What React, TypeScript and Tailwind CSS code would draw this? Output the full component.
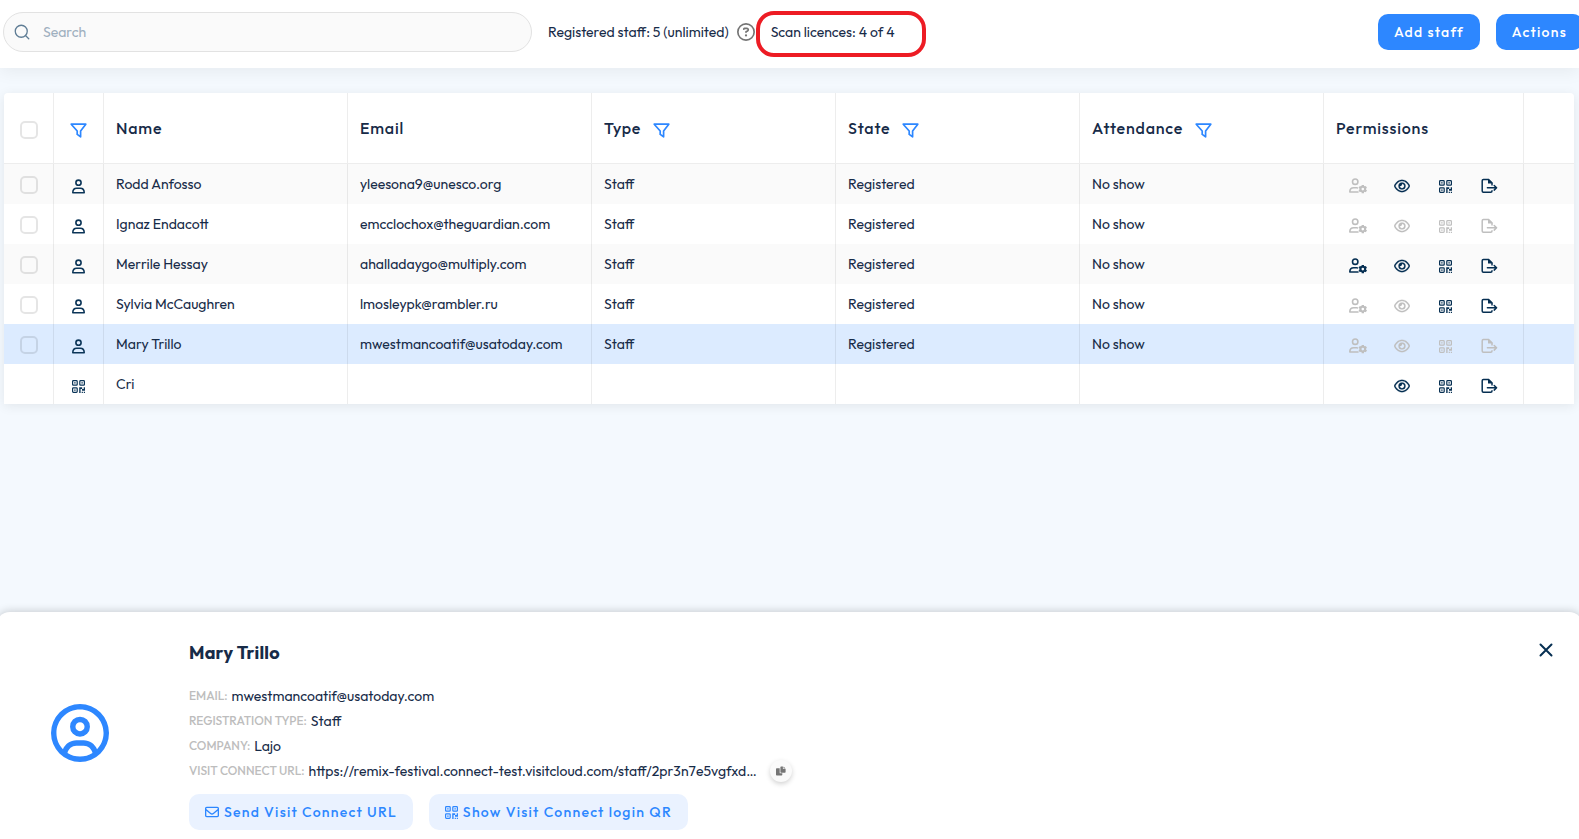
import type { ReactNode } from "react";
import { Search } from "lucide-react";
import { FaRegCircleQuestion, FaRegCircleUser, FaRegEnvelope, FaRegEye } from "react-icons/fa6";

type Permission = "manage" | "view" | "scan" | "export";

interface Person {
  name: string;
  email: string;
  device?: boolean;
  selected?: boolean;
  granted: Permission[];
}

const people: Person[] = [
  { name: "Rodd Anfosso", email: "yleesona9@unesco.org", granted: ["view", "scan", "export"] },
  { name: "Ignaz Endacott", email: "emcclochox@theguardian.com", granted: [] },
  { name: "Merrile Hessay", email: "ahalladaygo@multiply.com", granted: ["manage", "view", "scan", "export"] },
  { name: "Sylvia McCaughren", email: "lmosleypk@rambler.ru", granted: ["scan", "export"] },
  { name: "Mary Trillo", email: "mwestmancoatif@usatoday.com", selected: true, granted: [] },
  { name: "Cri", email: "", device: true, granted: ["view", "scan", "export"] },
];

function FilterIcon() {
  return (
    <svg viewBox="0 0 17 15" className="h-[15px] w-[17px]" fill="none" stroke="currentColor" strokeWidth="1.7" strokeLinejoin="round" aria-hidden="true">
      <path d="M1.2 1.2h14.600L10.600 8v5.800L7.200 11.400V8z" />
    </svg>
  );
}

function UserIcon() {
  return (
    <svg viewBox="0 0 13 15" className="h-[15px] w-[13px]" fill="none" stroke="currentColor" strokeWidth="1.6" aria-hidden="true">
      <circle cx="6.5" cy="3.7" r="2.6" />
      <path d="M.8 13.700c0-2.600 1.600-4.400 3.900-4.400h3.600c2.300 0 3.900 1.800 3.900 4.400z" strokeLinejoin="round" />
    </svg>
  );
}

function QrIcon() {
  return (
    <svg viewBox="0.5 0.5 13 13" className="size-[13px]" fill="currentColor" aria-hidden="true">
      <g fill="none" stroke="currentColor" strokeWidth="1.2">
        <rect x="1.1" y="1.1" width="4.6" height="4.6" rx="0.8" />
        <rect x="8.3" y="1.1" width="4.6" height="4.6" rx="0.8" />
        <rect x="1.1" y="8.3" width="4.6" height="4.6" rx="0.8" />
      </g>
      <path d="M2.7 2.7h1.4v1.4H2.7zM9.9 2.7h1.4v1.4H9.9zM2.7 9.9h1.4v1.4H2.7z" />
      <path d="M7.7 7.7h3v1.7h1.5V7.7h1.3v3.6h-3V9.6H9.1v3.9H7.7zM10.2 12.2h1.2v1.3h-1.2zM12.3 12.2h1.2v1.3h-1.2z" />
    </svg>
  );
}

function UserGearIcon() {
  return (
    <svg viewBox="0 0 18 16" className="h-4 w-[18px]" fill="none" stroke="currentColor" strokeWidth="1.6" aria-hidden="true">
      <circle cx="6.2" cy="3.7" r="2.7" />
      <path d="M9.6 14H.8c0-2.6 1.7-4.2 4-4.2h2.8c.6 0 1.1.1 1.5.3" strokeLinejoin="round" />
      <circle cx="13.8" cy="11.1" r="2.3" strokeWidth="2" />
      <path
        d="M13.8 6.9v1.6M13.8 13.7v1.6M10.16 9l1.4.8M16.04 12.4l1.4.8M10.16 13.2l1.4-.8M16.04 9.8l1.4-.8"
        strokeWidth="2.4"
      />
    </svg>
  );
}

function FileExportIcon() {
  return (
    <svg viewBox="0 0 17 16" className="h-4 w-[17px]" fill="none" stroke="currentColor" strokeWidth="1.5" aria-hidden="true">
      <path d="M11 7.4V4.8L7.6 1.6H2.4c-.8 0-1.2.5-1.2 1.2v10.2c0 .8.4 1.2 1.2 1.2h7.4c.8 0 1.2-.4 1.2-1.2v-.8" />
      <path d="M7 1v4.6h4.8z" fill="currentColor" stroke="none" />
      <path d="M6.4 9.8h9M13.2 7.5l2.4 2.3-2.4 2.3" strokeLinejoin="round" strokeLinecap="round" />
    </svg>
  );
}

function CopyIcon() {
  return (
    <svg viewBox="0 0 10 10" className="size-2.5" fill="currentColor" aria-hidden="true">
      <path d="M.7 2.3h3v5h2.6v1.4c0 .4-.3.7-.7.7H.7C.3 9.4 0 9.1 0 8.7V3c0-.4.3-.7.7-.7z" />
      <path d="M5.1.4h1.8v2.5h2.7V6c0 .4-.3.7-.7.7H5.1c-.4 0-.7-.3-.7-.7V1.1c0-.4.3-.7.7-.7z" />
      <path d="M7.5.4l2.1 2H7.5z" />
    </svg>
  );
}

const permissionIcons: { key: Permission; label: string; icon: ReactNode }[] = [
  { key: "manage", label: "Manage staff", icon: <UserGearIcon /> },
  { key: "view", label: "View visitors", icon: <FaRegEye className="size-4" stroke="currentColor" strokeWidth={8} /> },
  { key: "scan", label: "Scan", icon: <QrIcon /> },
  { key: "export", label: "Export", icon: <FileExportIcon /> },
];

function Checkbox({ label }: { label: string }) {
  return (
    <input
      type="checkbox"
      aria-label={label}
      className="mt-0.5 block size-[18px] appearance-none rounded-[5px] border-2 border-black/10 checked:bg-[#2d87ff]"
    />
  );
}

function HeaderCell({ title, filter }: { title: string; filter?: boolean }) {
  return (
    <th scope="col" className="border-r border-b border-black/[0.07] px-3 text-left font-medium">
      <div className="flex items-center gap-3 text-base tracking-wider">
        <span>{title}</span>
        {filter && (
          <button type="button" aria-label={`Filter by ${title}`} className="mt-1 text-[#2d87ff]">
            <FilterIcon />
          </button>
        )}
      </div>
    </th>
  );
}

function PersonRow({ person }: { person: Person }) {
  const cell = "border-r border-black/[0.07] px-3";
  const state = person.device ? ["", "", ""] : ["Staff", "Registered", "No show"];
  return (
    <tr className={person.selected ? "h-10 bg-[#dcebff]" : "h-10 odd:bg-[#fafafa]"}>
      <td className="border-r border-black/[0.07] px-4">
        {!person.device && <Checkbox label={`Select ${person.name}`} />}
      </td>
      <td className="border-r border-black/[0.07] text-[#0b3558]">
        <div className="mt-1 flex justify-center">{person.device ? <QrIcon /> : <UserIcon />}</div>
      </td>
      <td className={cell}>{person.name}</td>
      <td className={cell}>{person.email}</td>
      {state.map((value, i) => (
        <td key={i} className={cell}>
          {value}
        </td>
      ))}
      <td className="border-r border-black/[0.07] px-3">
        <div className="mt-1 grid grid-cols-4">
          {permissionIcons.map(({ key, label, icon }) => {
            const on = person.granted.includes(key);
            if (person.device && !on) return <span key={key} />;
            return (
              <button
                key={key}
                type="button"
                aria-label={label}
                aria-pressed={on}
                className={on ? "flex h-5 items-center justify-center text-[#062f52]" : "flex h-5 items-center justify-center text-[#bfbfbf]"}
              >
                {icon}
              </button>
            );
          })}
        </div>
      </td>
      <td />
    </tr>
  );
}

function Detail({ label, children }: { label: string; children: ReactNode }) {
  return (
    <div className="flex h-[25px] items-center gap-1">
      <dt className="text-xs font-medium text-[#bdbdbd]">{label}</dt>
      <dd className="flex items-center gap-3">{children}</dd>
    </div>
  );
}

export default function App() {
  return (
    <div className="flex min-h-screen flex-col overflow-hidden bg-[#f4f9fe] font-['Outfit','Lato',sans-serif] text-sm leading-5 text-[#172b48]">
      <header className="flex h-17 items-center bg-white pb-1 pl-[3px] shadow-[0_4px_16px_rgba(0,0,0,0.06)]">
        <label className="flex h-10 w-[529px] items-center gap-3 rounded-full border border-[#e2e2e2] bg-[#fafafa] px-[9px]">
          <Search className="size-[18px] text-[#5f7d95]" strokeWidth={1.75} aria-hidden="true" />
          <input
            type="search"
            aria-label="Search"
            placeholder="Search"
            className="min-w-0 flex-1 bg-transparent outline-none placeholder:text-[#9fb0bf]"
          />
        </label>
        <p className="ml-4 whitespace-nowrap">Registered staff: 5 (unlimited)</p>
        <button type="button" aria-label="About registered staff" className="ml-2 text-[#757575]">
          <FaRegCircleQuestion className="size-[18px]" />
        </button>
        <p className="mt-1 ml-px flex h-[46px] w-[170px] items-center whitespace-nowrap rounded-[18px] border-4 border-[#ed1c24] pb-1 pl-[11px]">
          Scan licences: 4 of 4
        </p>
        <div className="-mr-1 ml-auto flex gap-4 font-medium tracking-[0.09em] text-white">
          <button type="button" className="h-9 rounded-[10px] bg-[#2d87ff] px-4">
            Add staff
          </button>
          <button type="button" className="h-9 rounded-[10px] bg-[#2d87ff] px-4">
            Actions
          </button>
        </div>
      </header>

      <main className="flex-1 pt-[25px] pr-[5px] pl-1">
        <div className="overflow-hidden rounded-t-[4px] bg-white shadow-[0_2px_12px_rgba(0,0,0,0.08)]">
          <table className="w-full table-fixed border-separate border-spacing-0">
            <colgroup>
              <col className="w-[50px]" />
              <col className="w-[50px]" />
              <col />
              <col />
              <col />
              <col />
              <col />
              <col className="w-[200px]" />
              <col className="w-[50px]" />
            </colgroup>
            <thead>
              <tr className="h-[71px]">
                <th className="border-r border-b border-black/[0.07] px-4 pt-0.5">
                  <Checkbox label="Select all" />
                </th>
                <th className="border-r border-b border-black/[0.07]">
                  <button type="button" aria-label="Filter by kind" className="mt-1 flex w-full justify-center text-[#2d87ff]">
                    <FilterIcon />
                  </button>
                </th>
                <HeaderCell title="Name" />
                <HeaderCell title="Email" />
                <HeaderCell title="Type" filter />
                <HeaderCell title="State" filter />
                <HeaderCell title="Attendance" filter />
                <HeaderCell title="Permissions" />
                <td className="border-b border-black/[0.07]" />
              </tr>
            </thead>
            <tbody>
              {people.map((person) => (
                <PersonRow key={person.name} person={person} />
              ))}
            </tbody>
          </table>
        </div>
      </main>

      <section aria-label="Mary Trillo" className="-mx-1 flex rounded-t-[14px] bg-white px-1 pb-[9px] shadow-[0_-1px_8px_rgba(0,0,0,0.18)]">
        <div className="flex w-[189px] items-center pt-6 pl-[51px] text-[#2d87ff]">
          <FaRegCircleUser className="size-[58px]" />
        </div>
        <div className="flex-1 pt-[29px]">
          <h2 className="mb-[18px] text-lg leading-6 font-bold tracking-[0.0125em]">Mary Trillo</h2>
          <dl className="mb-[11px]">
            <Detail label="EMAIL:">mwestmancoatif@usatoday.com</Detail>
            <Detail label="REGISTRATION TYPE:">Staff</Detail>
            <Detail label="COMPANY:">Lajo</Detail>
            <Detail label="VISIT CONNECT URL:">
              <span>https://remix-festival.connect-test.visitcloud.com/staff/2pr3n7e5vgfxd…</span>
              <button
                type="button"
                aria-label="Copy URL"
                className="ml-px flex size-[22px] items-center justify-center rounded-full bg-[#fafafa] text-[#757575] shadow-[0_2px_5px_rgba(0,0,0,0.18)]"
              >
                <CopyIcon />
              </button>
            </Detail>
          </dl>
          <div className="flex gap-4 font-medium tracking-[0.09em] text-[#2d87ff]">
            <button type="button" className="flex h-9 items-center gap-[5px] rounded-[10px] bg-[#eaf2ff] px-4">
              <FaRegEnvelope className="size-[14px]" />
              Send Visit Connect URL
            </button>
            <button type="button" className="flex h-9 items-center gap-[5px] rounded-[10px] bg-[#eaf2ff] px-4">
              <QrIcon />
              Show Visit Connect login QR
            </button>
          </div>
        </div>
        <button type="button" aria-label="Close" className="mt-[30px] mr-[25px] size-4 self-start text-[#062f52]">
          <svg viewBox="0 0 16 16" className="size-4" fill="none" stroke="currentColor" strokeWidth="2" strokeLinecap="round" aria-hidden="true">
            <path d="M2.5 2.5l11 11M13.5 2.5l-11 11" />
          </svg>
        </button>
      </section>
    </div>
  );
}
